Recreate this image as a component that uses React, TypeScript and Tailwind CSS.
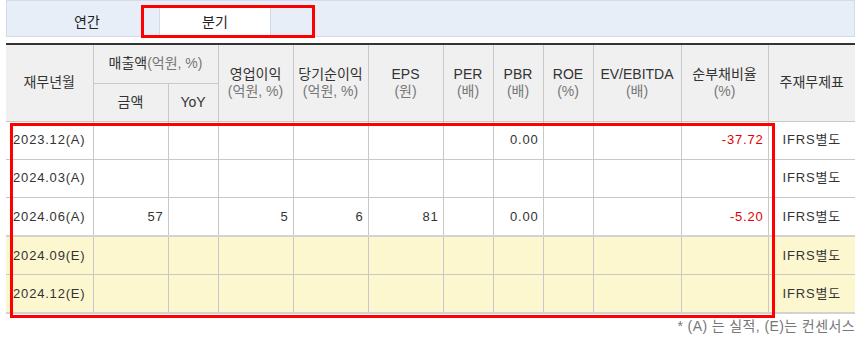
import React from "react";

const font = {
  fontFamily: '"Liberation Sans", "Noto Sans CJK KR", sans-serif',
};

interface Row {
  date: string;
  est: boolean;
  cells: string[];
}

const rows: Row[] = [
  { date: "2023.12(A)", est: false, cells: ["", "", "", "", "", "", "0.00", "", "", "-37.72"] },
  { date: "2024.03(A)", est: false, cells: ["", "", "", "", "", "", "", "", "", ""] },
  { date: "2024.06(A)", est: false, cells: ["57", "", "5", "6", "81", "", "0.00", "", "", "-5.20"] },
  { date: "2024.09(E)", est: true, cells: ["", "", "", "", "", "", "", "", "", ""] },
  { date: "2024.12(E)", est: true, cells: ["", "", "", "", "", "", "", "", "", ""] },
];

const widths = [87, 75, 50, 75, 75, 75, 50, 50, 50, 88, 87, 87];

const Unit = ({ children }: { children: React.ReactNode }) => (
  <span className="text-[#777]">{children}</span>
);

const th = "font-normal border-r border-b border-[#c8c8c8] text-[14px] whitespace-nowrap";

const App = () => {
  return (
    <div className="relative w-[865px] h-[343px] bg-white text-[13px] text-[#333]" style={font}>
      <div className="ml-[6px] w-[849px]">
        {/* tabs */}
        <div className="h-[37px] bg-[#e8eef8] border border-[#d3dbe8] flex items-end pl-[24px] gap-[16px]">
          <div className="w-[112px] h-[28px] flex items-center justify-center text-[14px] text-[#222]">
            연간
          </div>
          <div className="w-[112px] h-[28px] flex items-center justify-center bg-white border-l border-r border-[#d3dbe8] text-[14px] text-[#222]">
            분기
          </div>
        </div>

        <table className="mt-[6px] table-fixed border-collapse w-[849px] border-t-2 border-t-[#333]">
          <colgroup>
            {widths.map((w, i) => (
              <col key={i} style={{ width: w }} />
            ))}
          </colgroup>
          <thead className="bg-[#f0f0f0] text-center leading-[17px] text-[#333]">
            <tr className="h-[39px]">
              <th rowSpan={2} className={th}>
                재무년월
              </th>
              <th colSpan={2} className={th}>
                매출액<Unit>(억원, %)</Unit>
              </th>
              <th rowSpan={2} className={th}>
                영업이익
                <br />
                <Unit>(억원, %)</Unit>
              </th>
              <th rowSpan={2} className={th}>
                당기순이익
                <br />
                <Unit>(억원, %)</Unit>
              </th>
              <th rowSpan={2} className={th}>
                EPS
                <br />
                <Unit>(원)</Unit>
              </th>
              <th rowSpan={2} className={th}>
                PER
                <br />
                <Unit>(배)</Unit>
              </th>
              <th rowSpan={2} className={th}>
                PBR
                <br />
                <Unit>(배)</Unit>
              </th>
              <th rowSpan={2} className={th}>
                ROE
                <br />
                <Unit>(%)</Unit>
              </th>
              <th rowSpan={2} className={th}>
                EV/EBITDA
                <br />
                <Unit>(배)</Unit>
              </th>
              <th rowSpan={2} className={th}>
                순부채비율
                <br />
                <Unit>(%)</Unit>
              </th>
              <th rowSpan={2} className="font-normal border-b border-[#c8c8c8] text-[14px]">
                주재무제표
              </th>
            </tr>
            <tr className="h-[38px]">
              <th className={th}>금액</th>
              <th className={th}>YoY</th>
            </tr>
          </thead>
          <tbody className="tracking-[0.8px]">
            {rows.map((r, ri) => (
              <tr
                key={r.date}
                className={
                  (r.est ? "bg-[#fdf7d0] " : "") +
                  (ri === 2 || ri === 4
                    ? "h-[39px] border-b-2 border-b-[#d2d2d2]"
                    : "h-[38px] border-b border-b-[#c8c8c8]")
                }
              >
                <td className="text-center border-r border-[#c8c8c8] whitespace-nowrap">{r.date}</td>
                {r.cells.map((c, ci) => (
                  <td
                    key={ci}
                    className={
                      "text-right pr-[4px] border-r border-[#c8c8c8] " +
                      (c.startsWith("-") ? "text-[#e60000]" : "text-[#333]")
                    }
                  >
                    {c}
                  </td>
                ))}
                <td className="text-center whitespace-nowrap">IFRS별도</td>
              </tr>
            ))}
          </tbody>
        </table>

        <div className="mt-[2px] text-right text-[14px] tracking-[0.4px] text-[#777] whitespace-nowrap">
          * (A) 는 실적, (E)는 컨센서스
        </div>
      </div>

      {/* annotation boxes */}
      <div className="absolute left-[141px] top-[5px] w-[174px] h-[33px] border-[3px] border-[#ff0000]" />
      <div className="absolute left-[10px] top-[123px] w-[765px] h-[195px] border-[3px] border-[#ff0000]" />
    </div>
  );
};

export default App;
